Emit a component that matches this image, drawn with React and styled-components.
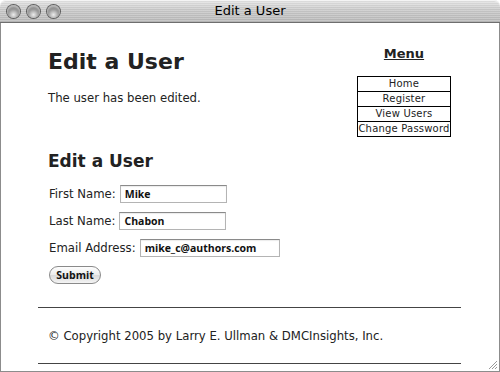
import React from "react";
import styled, { createGlobalStyle } from "styled-components";

const GlobalStyle = createGlobalStyle`
  html, body {
    margin: 0;
    padding: 0;
    background: #fff;
  }
  body {
    font-family: "DejaVu Sans", Verdana, sans-serif;
    color: #222;
  }
`;

const Window = styled.div`
  width: 500px;
  height: 372px;
  box-sizing: border-box;
  display: flex;
  flex-direction: column;
  position: relative;
  overflow: hidden;
`;

const TitleBar = styled.div`
  height: 22px;
  flex: none;
  display: flex;
  align-items: center;
  position: relative;
  border-radius: 6px 6px 0 0;
  border-bottom: 1px solid #6e6e6e;
  background:
    repeating-linear-gradient(
      180deg,
      rgba(255, 255, 255, 0.18) 0px,
      rgba(255, 255, 255, 0.18) 1px,
      rgba(0, 0, 0, 0.03) 1px,
      rgba(0, 0, 0, 0.03) 2px
    ),
    linear-gradient(180deg, #e6e6e6 0%, #c9c9c9 45%, #b9b9b9 100%);
  box-shadow: inset 0 1px 0 #f4f4f4;
`;

const Lights = styled.div`
  display: flex;
  gap: 7px;
  padding-left: 7px;
`;

const Light = styled.span`
  width: 13px;
  height: 13px;
  border-radius: 50%;
  background: radial-gradient(
    circle at 50% 75%,
    #ececec 0%,
    #9a9a9a 45%,
    #4a4a4a 100%
  );
  box-shadow: 0 0 0 1px #5e5e5e, inset 0 2px 2px rgba(255, 255, 255, 0.55);
`;

const Title = styled.div`
  position: absolute;
  left: 0;
  right: 0;
  text-align: center;
  font-size: 13px;
  color: #000;
  top: 3px;
`;

const Body = styled.div`
  flex: 1;
  display: flex;
  flex-direction: column;
  border-left: 1px solid #8c8c8c;
  border-right: 1px solid #8c8c8c;
  border-bottom: 1px solid #8c8c8c;
  position: relative;
`;

const Top = styled.div`
  display: flex;
  justify-content: space-between;
`;

const Main = styled.div`
  padding: 25px 0 0 47px;
`;

const Heading = styled.h1`
  margin: 0;
  font-size: 22px;
  line-height: 28px;
  font-weight: bold;
  color: #222;
`;

const Message = styled.p`
  margin: 15px 0 0;
  font-size: 11.7px;
  line-height: 14px;
`;

const SubHeading = styled.h2`
  margin: 46px 0 0;
  font-size: 17px;
  line-height: 20px;
  font-weight: bold;
`;

const Form = styled.form`
  margin-top: 14px;
  display: flex;
  flex-direction: column;
  gap: 9px;
`;

const Row = styled.div`
  display: flex;
  align-items: center;
  font-size: 11.7px;
`;

const Label = styled.label`
  margin-right: 4px;
  margin-left: 1px;
`;

const Input = styled.input`
  box-sizing: border-box;
  width: ${(p) => p.$w}px;
  height: 18px;
  border: 1px solid #b4b4b4;
  border-top-color: #8a8a8a;
  box-shadow: inset 0 1px 1px rgba(0, 0, 0, 0.08);
  padding: 0 4px;
  font-family: "Open Sans", "DejaVu Sans", sans-serif;
  font-weight: 700;
  font-size: 10.5px;
  color: #111;
  outline: none;
`;

const Button = styled.button`
  margin-left: 1px;
  width: 52px;
  height: 18px;
  border-radius: 9px;
  border: 1px solid #8a8a8a;
  background: linear-gradient(180deg, #fdfdfd 0%, #ececec 50%, #dadada 51%, #f4f4f4 100%);
  font-family: "Open Sans", "DejaVu Sans", sans-serif;
  font-weight: 700;
  font-size: 10.5px;
  color: #111;
  padding: 0;
`;

const Sidebar = styled.div`
  width: 94px;
  margin: 23px 48px 0 0;
  display: flex;
  flex-direction: column;
  align-items: center;
`;

const MenuTitle = styled.div`
  font-size: 13px;
  font-weight: bold;
  text-decoration: underline;
  line-height: 16px;
`;

const MenuList = styled.ul`
  list-style: none;
  margin: 14px 0 0;
  padding: 0;
  width: 94px;
  border: 1px solid #000;
  box-sizing: border-box;
`;

const MenuItem = styled.li`
  font-size: 10px;
  line-height: 14px;
  text-align: center;
  letter-spacing: 0.2px;
  white-space: nowrap;
  & + & {
    border-top: 1px solid #000;
  }
`;

const Footer = styled.div`
  margin: 23px 38px 0 37px;
  border-top: 1px solid #444;
  border-bottom: 1px solid #444;
  padding: 21px 0 0 10px;
  height: 34px;
`;

const Copy = styled.p`
  margin: 0;
  font-size: 11.7px;
  line-height: 14px;
`;

const Grip = styled.svg`
  position: absolute;
  right: 1px;
  bottom: 1px;
`;

export default function App() {
  return (
    <>
      <GlobalStyle />
      <Window>
        <TitleBar>
          <Lights>
            <Light />
            <Light />
            <Light />
          </Lights>
          <Title>Edit a User</Title>
        </TitleBar>
        <Body>
          <Top>
            <Main>
              <Heading>Edit a User</Heading>
              <Message>The user has been edited.</Message>
              <SubHeading>Edit a User</SubHeading>
              <Form onSubmit={(e) => e.preventDefault()}>
                <Row>
                  <Label>First Name:</Label>
                  <Input $w={107} defaultValue="Mike" />
                </Row>
                <Row>
                  <Label>Last Name:</Label>
                  <Input $w={107} defaultValue="Chabon" />
                </Row>
                <Row>
                  <Label>Email Address:</Label>
                  <Input $w={140} defaultValue="mike_c@authors.com" />
                </Row>
                <Row>
                  <Button type="submit">Submit</Button>
                </Row>
              </Form>
            </Main>
            <Sidebar>
              <MenuTitle>Menu</MenuTitle>
              <MenuList>
                <MenuItem>Home</MenuItem>
                <MenuItem>Register</MenuItem>
                <MenuItem>View Users</MenuItem>
                <MenuItem>Change Password</MenuItem>
              </MenuList>
            </Sidebar>
          </Top>
          <Footer>
            <Copy>© Copyright 2005 by Larry E. Ullman &amp; DMCInsights, Inc.</Copy>
          </Footer>
          <Grip width="12" height="12" viewBox="0 0 12 12">
            <path d="M11 3 L3 11 M11 6 L6 11 M11 9 L9 11" stroke="#999" strokeWidth="1" />
          </Grip>
        </Body>
      </Window>
    </>
  );
}
